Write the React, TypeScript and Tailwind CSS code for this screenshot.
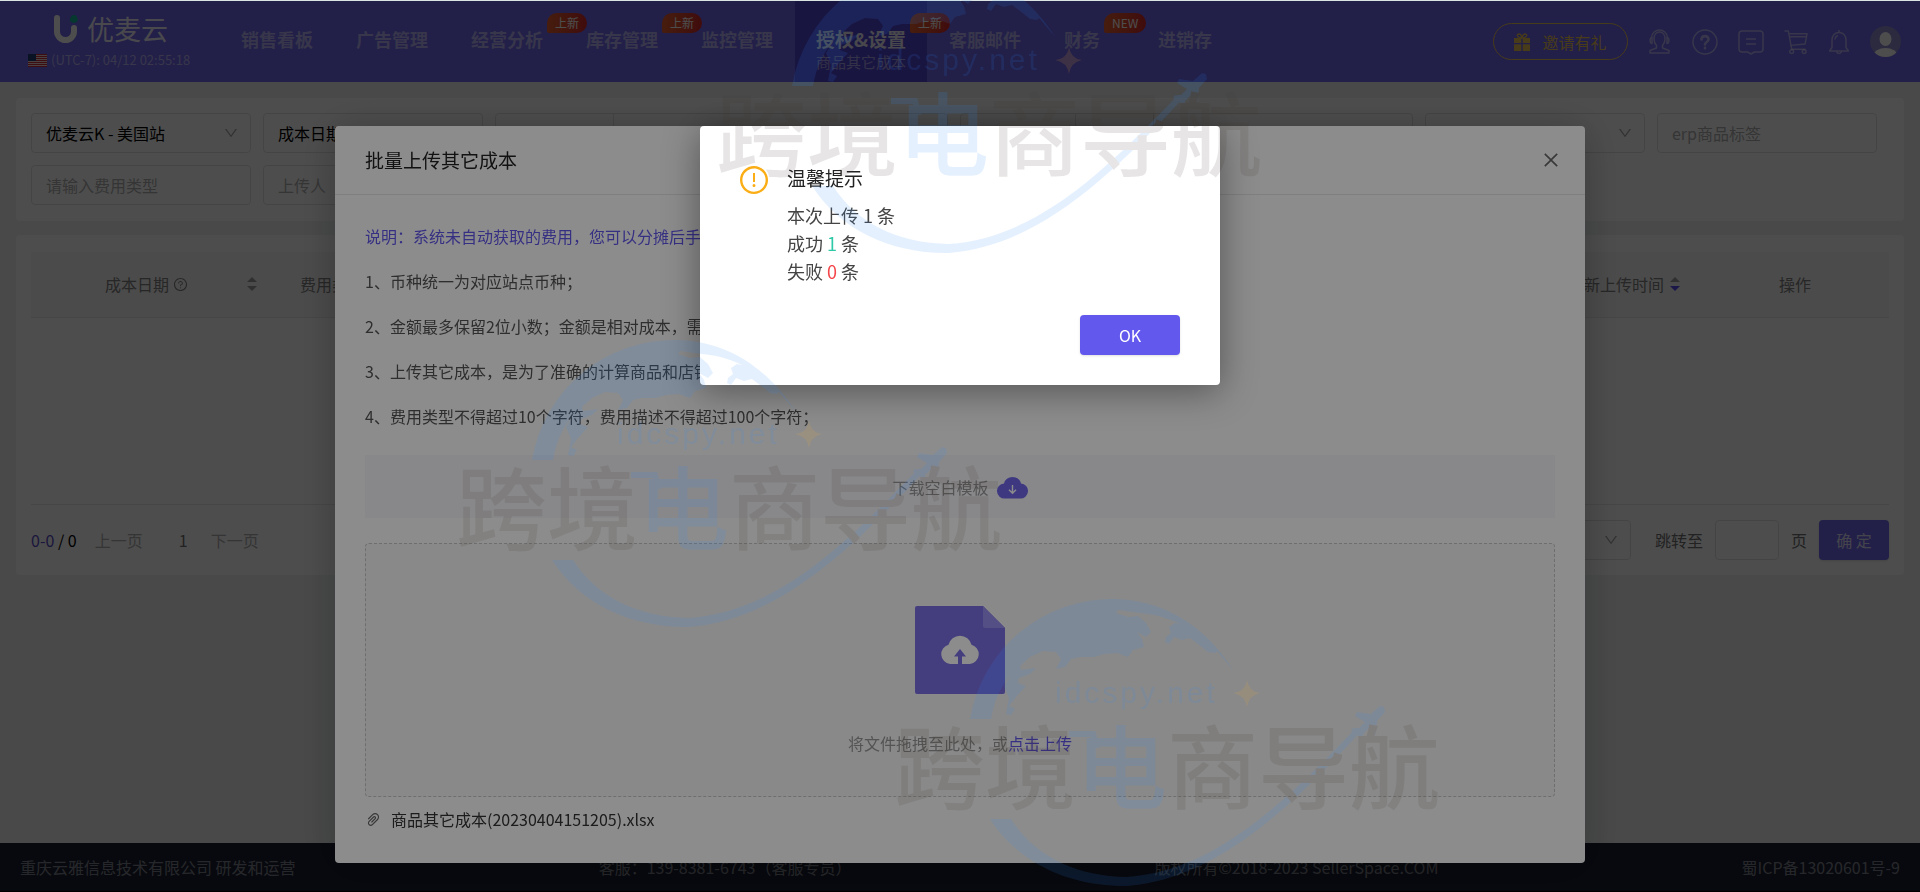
import React from 'react';
import {
  AiOutlineClose,
  AiOutlineDown,
  AiOutlineExclamationCircle,
  AiOutlinePaperClip,
  AiOutlineQuestionCircle,
} from 'react-icons/ai';

const field = 'h-10 rounded border border-[#e2e2e2] bg-white';

function Logo() {
  return (
    <svg viewBox="0 0 24 29" className="h-[29px] w-6" aria-hidden="true">
      <path d="M3 3v13.5a8.5 8.5 0 0 0 17 0V13" fill="none" stroke="#fff" strokeWidth="6" strokeLinecap="round" />
      <path d="M20 0c2.200 0 3 1.400 3 2.400 1.200.8 1.400 4.600-.8 4.600-.8 1.200-3.600 1.200-4.400 0-2.600 0-2.400-3.600-1-4.400C17 1 18 0 20 0Z" fill="#14b8a0" />
    </svg>
  );
}

function Flag() {
  return (
    <svg viewBox="0 0 19 13" className="h-[13px] w-[19px]" aria-hidden="true">
      <rect width="19" height="13" fill="#f3d9d9" />
      {[0, 2, 4, 6, 8, 10, 12].map((y) => (
        <rect key={y} y={y} width="19" height="1" fill="#c8303c" />
      ))}
      <rect width="8" height="7" fill="#1f3f78" />
    </svg>
  );
}

type NavEntry = { label: string; badge?: string; sub?: string; wide?: boolean };

const navEntries: NavEntry[] = [
  { label: '销售看板' },
  { label: '广告管理' },
  { label: '经营分析', badge: '上新' },
  { label: '库存管理', badge: '上新' },
  { label: '监控管理' },
  { label: '授权&设置', badge: '上新', sub: '商品其它成本' },
  { label: '客服邮件' },
  { label: '财务', badge: 'NEW', wide: true },
  { label: '进销存' },
];

function NavItem({ label, badge, sub, wide }: NavEntry) {
  return (
    <a
      href="#"
      className={`flex flex-col items-center pt-6 font-bold ${sub ? 'bg-[#5545d8] text-[19px] text-white/90' : 'text-[18px] text-white/50'} ${wide ? 'pl-[21px] pr-9' : 'px-[21px]'}`}
    >
      <span className="relative leading-[28px]">
        {label}
        {badge && (
          <span className="absolute -top-3 left-full ml-1 h-5 rounded-[10px] rounded-bl-[2px] bg-linear-to-r from-[#e8602f] to-[#d3262a] px-2 text-[12px] leading-5 font-normal whitespace-nowrap text-white">
            {badge}
          </span>
        )}
      </span>
      {sub && <span className="text-[15px] leading-[18px] font-normal text-white/50">{sub}</span>}
    </a>
  );
}

function HeaderIcons() {
  const line = { fill: 'none', stroke: 'currentColor', strokeWidth: 1.5, strokeLinejoin: 'round' as const, strokeLinecap: 'round' as const };
  return (
    <>
      <button aria-label="客服" className="text-white/50">
        <svg viewBox="0 0 24 26" className="h-[26px] w-6" {...line}>
          <path d="M2 24v-2.500l6.500-2.500v-2.500C6.500 14.500 6 12.500 6 10c0-4.500 2.500-7 5.500-7S17 5.500 17 10c0 2.500-.5 4.500-2.500 6.500V19l6.500 2.500V24Z" />
          <path d="M3.500 8.500C4 4 7.500 1 11.500 1S19 4 19.500 8.500M4 8.500c-2.500 0-2.500 6 0 6ZM19 8.500c2.500 0 2.500 6 0 6Z" />
        </svg>
      </button>
      <button aria-label="帮助" className="text-white/50">
        <svg viewBox="0 0 26 26" className="size-[26px]" {...line}>
          <circle cx="13" cy="13" r="12" />
          <path d="M9.500 10.500c0-4.500 7-4.500 7 0 0 2.500-3.500 2.500-3.500 5M13 18.800v.4" strokeWidth="2.600" />
        </svg>
      </button>
      <button aria-label="消息" className="text-white/50">
        <svg viewBox="0 0 26 26" className="size-[26px]" {...line}>
          <path d="M4 2h18a3 3 0 0 1 3 3v15a3 3 0 0 1-3 3h-5.500L13 25l-3.500-2H4a3 3 0 0 1-3-3V5a3 3 0 0 1 3-3ZM8.500 10h9M8.500 15h9" />
        </svg>
      </button>
      <button aria-label="购物车" className="text-white/50">
        <svg viewBox="0 0 25 26" className="h-[26px] w-6" {...line}>
          <path d="M1 1.500h3.500L8 20.500h14M5.500 4.500H24l-2 10.500-15 1.500M6 7.500h17" />
          <circle cx="8" cy="23" r="2" />
          <circle cx="21" cy="23" r="2" />
        </svg>
      </button>
      <button aria-label="通知" className="text-white/50">
        <svg viewBox="0 0 22 26" className="h-[26px] w-[22px]" {...line}>
          <path d="M1.500 22 4 18.500V11c0-4.500 3-7.500 7-7.500s7 3 7 7.500v7.500l2.500 3.500ZM11 3.500v-2M8.500 22.500c.5 2.500 4.500 2.500 5 0M7 10c.2-1.500 1-2.700 2.400-3.200" />
        </svg>
      </button>
      <button aria-label="账户">
        <svg viewBox="0 0 31 31" className="size-[31px]">
          <clipPath id="avatar"><circle cx="15.500" cy="15.500" r="15.500" /></clipPath>
          <g clipPath="url(#avatar)">
            <rect width="31" height="31" fill="#8e8bd0" />
            <ellipse cx="15.500" cy="13" rx="6" ry="7" fill="#fff" />
            <ellipse cx="15.500" cy="30" rx="12" ry="8" fill="#fff" />
          </g>
        </svg>
      </button>
    </>
  );
}

function Header() {
  return (
    <header className="flex h-[81px] shrink-0 bg-[#7067ee]">
      <div className="flex w-[220px] shrink-0 flex-col pt-[9px] pl-7">
        <div className="flex items-center gap-[9px] pl-[26px] text-[27px] leading-[38px] text-white/90">
          <Logo />
          优麦云
        </div>
        <div className="flex items-center gap-1 text-[13px] leading-6 whitespace-nowrap text-white/50">
          <Flag />
          (UTC-7): 04/12 02:55:18
        </div>
      </div>
      <nav className="flex gap-px whitespace-nowrap">
        {navEntries.map((entry) => (
          <NavItem key={entry.label} {...entry} />
        ))}
      </nav>
      <div className="ml-auto flex items-center gap-5 pr-[19px]">
        <button className="flex h-[37px] w-[135px] items-center justify-center gap-3 rounded-full border border-[#eac258] text-[16px] text-[#eac258]">
          <svg viewBox="0 0 16 18" className="h-[18px] w-4" fill="currentColor" aria-hidden="true">
            <path d="M0 5h7.300v5H0zM8.700 5H16v5H8.700zM0 11.200h7.300V18H0zM8.700 11.200H16V18H8.700z" />
            <path d="M8 5C3 5 2 1 5 1c2 0 3 4 3 4s1-4 3-4c3 0 2 4-3 4Z" fill="none" stroke="currentColor" strokeWidth="1.300" />
          </svg>
          邀请有礼
        </button>
        <HeaderIcons />
      </div>
    </header>
  );
}

function SelectBox({ label, value, className }: { label: string; value: string; className: string }) {
  return (
    <div className={`relative shrink-0 ${className}`}>
      <select aria-label={label} className={`${field} w-full appearance-none px-[14px] text-[16px] text-black`}>
        <option>{value}</option>
      </select>
      <AiOutlineDown className="pointer-events-none absolute top-3 right-3 size-4 text-[#a8a8a8]" />
    </div>
  );
}

function Filters() {
  const input = `${field} w-[220px] px-[14px] text-[16px] placeholder:text-[#b0b0b0]`;
  return (
    <section className="flex h-[123px] flex-col gap-3 rounded bg-white p-[15px]">
      <div className="flex gap-3">
        <SelectBox label="店铺" value="优麦云K - 美国站" className="w-[220px]" />
        <SelectBox label="日期类型" value="成本日期" className="w-[220px]" />
        <div className={`${field} flex w-[453px]`}>
          <div className="w-[118px] border-r border-[#e2e2e2]" />
        </div>
        <div className={`${field} flex w-[453px]`}>
          <div className="w-[115px] border-r border-[#e2e2e2]" />
          <div className="w-[78px] border-r border-[#e2e2e2]" />
        </div>
        <SelectBox label="范围" value="" className="w-[220px]" />
        <input aria-label="erp商品标签" placeholder="erp商品标签" className={input} />
      </div>
      <div className="flex gap-3">
        <input aria-label="费用类型" placeholder="请输入费用类型" className={input} />
        <input aria-label="上传人" placeholder="上传人" className={input} />
      </div>
    </section>
  );
}

function Sorter({ desc }: { desc?: boolean }) {
  return (
    <svg viewBox="0 0 12 16" className="h-4 w-3 shrink-0" aria-hidden="true">
      <path d="M6 1l5 5H1z" fill="#a0a0a0" />
      <path d="M6 15l5-5H1z" fill={desc ? '#5a4cf0' : '#a0a0a0'} />
    </svg>
  );
}

function CostTable() {
  return (
    <section className="flex h-[340px] flex-col rounded bg-white px-[15px] pt-[17px]">
      <div className="h-[253px] border-b border-[#e8e8e8]">
        <table className="w-full table-fixed text-[16px] text-[#808080]">
          <thead>
            <tr className="h-[65px] border-b border-[#e8e8e8] bg-[#f8f8f8]">
              <th className="w-[247px] px-5 font-normal">
                <div className="flex items-center gap-1">
                  <span className="flex flex-1 items-center justify-center gap-1">
                    成本日期
                    <AiOutlineQuestionCircle className="size-[15px]" />
                  </span>
                  <Sorter />
                </div>
              </th>
              <th className="w-[250px] px-[22px] text-left font-normal">费用类型</th>
              <th />
              <th className="w-[153px] font-normal">
                <div className="flex items-center justify-end gap-[5px] pr-5 whitespace-nowrap">
                  最新上传时间
                  <Sorter desc />
                </div>
              </th>
              <th className="w-[188px] font-normal">操作</th>
            </tr>
          </thead>
        </table>
      </div>
      <div className="flex items-center pt-[15px] text-[16px] text-[#707070]">
        <span className="text-black"><span className="text-[#5a4cc8]">0-0</span> / 0</span>
        <button className="ml-[18px] text-[#b0b0b0]">上一页</button>
        <span className="w-[68px] pl-9">1</span>
        <button className="text-[#b0b0b0]">下一页</button>
        <div className="ml-auto flex items-center">
          <SelectBox label="每页条数" value="" className="w-[120px]" />
          <label htmlFor="jump" className="pr-3 pl-6">跳转至</label>
          <input id="jump" className={`${field} w-16 px-2`} />
          <span className="px-3">页</span>
          <button className="h-10 w-[70px] rounded bg-[#7067ee] text-white/80 shadow">确 定</button>
        </div>
      </div>
    </section>
  );
}

function UploadDialog() {
  return (
    <div className="fixed inset-x-0 top-px bottom-px bg-black/45 pt-[125px]">
      <div role="dialog" aria-label="批量上传其它成本" className="mx-auto w-[1250px] rounded bg-white text-[16px] shadow-[0_4px_40px_rgba(0,0,0,0.25)]">
        <div className="flex h-[69px] items-center justify-between border-b border-[#e8e8e8] pr-6 pl-[30px]">
          <h2 className="text-[19px] text-[#222]">批量上传其它成本</h2>
          <button aria-label="关闭" className="text-[#666]"><AiOutlineClose className="size-5" /></button>
        </div>
        <div className="px-[30px] pt-[19px]">
          <div className="leading-[45px] text-[#555]">
            <p className="text-[#6358ee]">说明：系统未自动获取的费用，您可以分摊后手动上传</p>
            <p>1、币种统一为对应站点币种；</p>
            <p>2、金额最多保留2位小数；金额是相对成本，需</p>
            <p>3、上传其它成本，是为了准确的计算商品和店铺</p>
            <p>4、费用类型不得超过10个字符，费用描述不得超过100个字符；</p>
          </div>
          <button className="mt-4 flex h-[63px] w-full items-center justify-center gap-2 bg-[#f7f7fc] text-[#999]">
            下载空白模板
            <svg viewBox="0 0 31 24" className="h-6 w-[31px]" aria-hidden="true">
              <path d="M8 23.500a7.500 7.500 0 0 1-1-15 8.800 8.800 0 0 1 17 0 7.500 7.500 0 0 1-1 15Z" fill="#7267ea" />
              <path d="M15.500 10v8M12 14.800l3.500 3.400 3.500-3.400" fill="none" stroke="#fff" strokeWidth="1.400" />
            </svg>
          </button>
          <div className="mt-[25px] flex h-[254px] flex-col items-center rounded border border-dashed border-[#c9c9c9] bg-[#fafafa] pt-[62px] text-[#999]">
            <svg viewBox="0 0 90 88" className="h-[88px] w-[90px]" aria-hidden="true">
              <path d="M2 0h66l22 22v64a2 2 0 0 1-2 2H2a2 2 0 0 1-2-2V2a2 2 0 0 1 2-2Z" fill="#7d72e8" />
              <path d="M68 0l22 22H70a2 2 0 0 1-2-2Z" fill="#9a90f2" />
              <path d="M35 58a9.800 9.800 0 0 1-1.500-19.200 11.800 11.800 0 0 1 23 0A9.800 9.800 0 0 1 55 58h-8v-7.500h4L45 43l-6 7.500h4V58Z" fill="#fff" />
            </svg>
            <p className="mt-[37px] leading-6">
              将文件拖拽至此处，或<a href="#" className="text-[#6358ee]">点击上传</a>
            </p>
          </div>
          <div className="flex h-[66px] items-start gap-[9px] pt-[10px] leading-6 text-[#333]">
            <AiOutlinePaperClip className="mt-1 size-[17px] text-[#666]" />
            商品其它成本(20230404151205).xlsx
          </div>
        </div>
      </div>
    </div>
  );
}

function ResultDialog() {
  return (
    <div className="fixed inset-x-0 top-px bottom-px bg-black/45 pt-[125px]">
      <div role="alertdialog" aria-label="温馨提示" className="mx-auto flex w-[520px] flex-col rounded bg-white pt-[38px] pr-10 pb-[30px] pl-[38px] shadow-[0_6px_36px_rgba(0,0,0,0.4)]">
        <div className="flex gap-[17px]">
          <AiOutlineExclamationCircle className="size-8 shrink-0 text-[#faad14]" />
          <div className="text-[18px] leading-[28px] text-[#444]">
            <h2 className="mb-[9px] text-[19px] text-[#222]">温馨提示</h2>
            <p>本次上传 1 条</p>
            <p>成功 <span className="text-[#2fc9a8]">1</span> 条</p>
            <p>失败 <span className="text-[#f5464b]">0</span> 条</p>
          </div>
        </div>
        <button className="mt-[30px] h-10 w-[100px] self-end rounded bg-[#6358ee] text-[16px] text-white shadow-sm">OK</button>
      </div>
    </div>
  );
}

function Watermark({ className }: { className: string }) {
  return (
    <svg viewBox="0 0 550 300" className={`absolute h-[300px] w-[550px] opacity-12 ${className}`}>
      <g fill="#2f8cff">
        <path d="M80 129A144 144 0 0 1 225 9C272 10 314 34 344 81L327 61 325 63 318 62 308 54 300 48 292 50 284 47 279 54 275 52 276 47 281 43 279 37 285 33 290 34C276 27 262 24 250 23L228 20 226 23 238 27 248 26 256 33 261 42 256 47 247 42 252 49 254 57 243 60 238 67 227 63 214 64 204 67 190 67 181 69 175 77 166 79 171 69 166 62 153 61 140 67 130 76 131 80 146 78 140 84 129 88 128 93 136 96 126 107 119 116 125 119 121 125 116 124 119 108 114 96 121 85C109 98 104 113 101 129Z" />
        <path d="M100 229C128 273 180 297 237 296 320 289 390 230 474 138L466 138C386 222 320 281 237 287 185 286 145 266 121 229Z" />
        <path d="M494 117l-4-1-9 8-14-2-2 4 10 6-7 7-5-1-2 3 6 3 3 6 3-2v-4l7-7 2 9 4-2 1-13 8-9Z" />
        <text x="165" y="113" fontSize="30" className="font-['Liberation_Sans',sans-serif] tracking-widest">idcspy.net</text>
      </g>
      <path d="M357 90Q359 102 370 103 359 105 357 117 355 105 343 103 355 102 357 90Z" fill="#ffb02e" />
      <text x="4" y="212" fontSize="91" className="font-['Noto_Sans_CJK_SC',sans-serif] font-medium" fill="#40362f">
        跨境<tspan fill="#2f8cff">电</tspan>商导航
      </text>
      <path d="M179 144h24l4 14" fill="none" stroke="#2f8cff" strokeWidth="6" />
    </svg>
  );
}

export default function App() {
  return (
    <div className="flex min-h-screen flex-col bg-[#f0f2f5] font-['Noto_Sans_CJK_SC',sans-serif] leading-6">
      <div className="h-px shrink-0 bg-[#dbe4e2]" />
      <Header />
      <main className="flex flex-1 flex-col gap-[14px] p-4">
        <Filters />
        <CostTable />
      </main>
      <footer className="flex h-12 items-center justify-between bg-[#1b1f30] px-5 text-[16px] text-white/45">
        <span>重庆云雅信息技术有限公司 研发和运营</span>
        <span>客服：139-8381-6743（客服专员）</span>
        <span>版权所有©2018-2023 SellerSpace.COM</span>
        <span>蜀ICP备13020601号-9</span>
      </footer>
      <div className="h-px shrink-0 bg-black" />
      <UploadDialog />
      <ResultDialog />
      <div className="pointer-events-none fixed inset-0 overflow-hidden" aria-hidden="true">
        <Watermark className="-top-[43px] left-[712px]" />
        <Watermark className="top-[331px] left-[452px]" />
        <Watermark className="top-[590px] left-[890px]" />
      </div>
    </div>
  );
}
